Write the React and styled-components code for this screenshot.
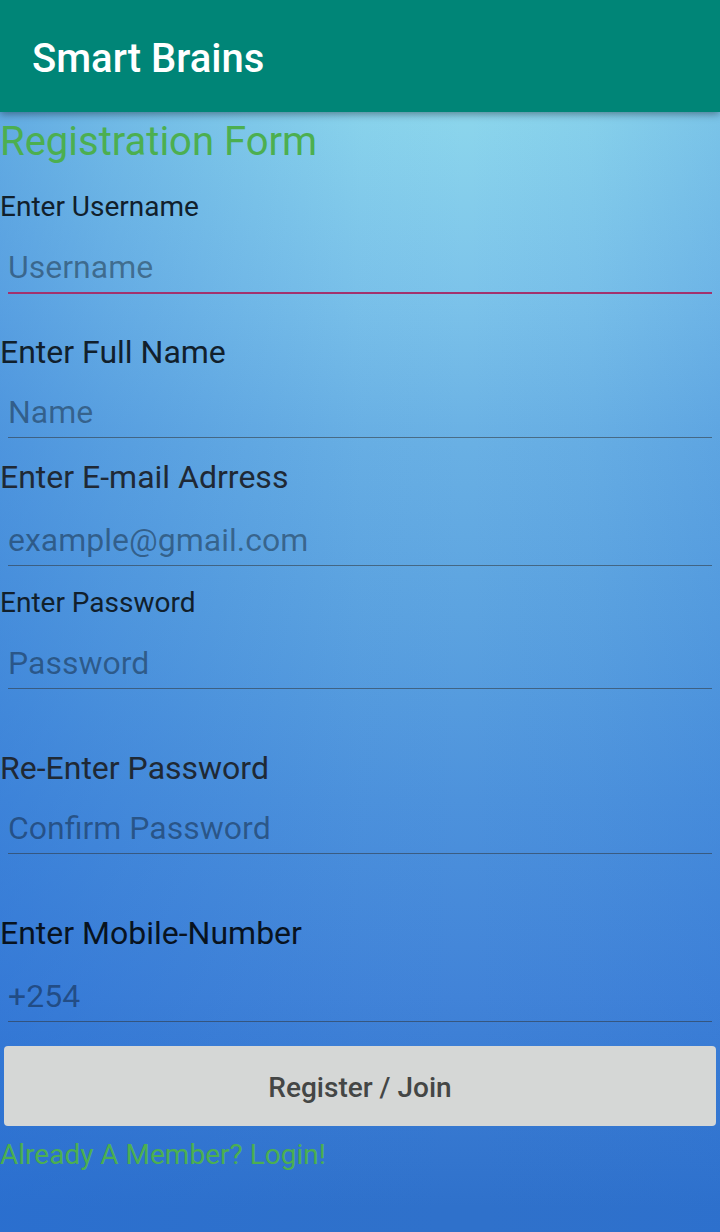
import React from "react";
import styled, { createGlobalStyle } from "styled-components";

const GlobalStyle = createGlobalStyle`
  * {
    box-sizing: border-box;
  }

  body {
    margin: 0;
    font-family: Roboto, "Liberation Sans", sans-serif;
  }
`;

const Screen = styled.div`
  display: flex;
  flex-direction: column;
  min-height: 100vh;
  background:
    linear-gradient(
      90deg,
      rgba(36, 108, 212, 0.4) 0%,
      rgba(36, 108, 212, 0.27) 15%,
      rgba(36, 108, 212, 0.14) 33%,
      rgba(36, 108, 212, 0.03) 50%,
      rgba(36, 108, 212, 0) 65%,
      rgba(36, 108, 212, 0.05) 82%,
      rgba(36, 108, 212, 0.17) 100%
    ),
    linear-gradient(
      180deg,
      #8cd6ec 9%,
      #7cc3ea 24%,
      #69b0e4 36%,
      #5ca3e0 50%,
      #4d92dc 65%,
      #4183d8 81%,
      #2f71cb 98%
    );
`;

const AppBar = styled.header`
  display: flex;
  align-items: center;
  height: 112px;
  padding: 6px 32px 0;
  background: #008577;
  box-shadow: 0 2px 8px rgba(0, 0, 0, 0.4);
`;

const AppTitle = styled.h1`
  margin: 0;
  color: #fff;
  font-size: 40px;
  font-weight: 500;
  line-height: 48px;
`;

const Form = styled.form`
  display: flex;
  flex-direction: column;
`;

const FormHeading = styled.h2`
  margin: 0;
  color: #4caf50;
  font-size: 40px;
  font-weight: 400;
  line-height: 60px;
`;

const Field = styled.div`
  display: flex;
  flex-direction: column;
  gap: ${(p) => p.$gap}px;
  padding-top: ${(p) => p.$space}px;
`;

const Label = styled.label`
  color: ${(p) => p.$color};
  font-size: ${(p) => (p.$small ? 28 : 32)}px;
  line-height: ${(p) => (p.$small ? 42 : 40)}px;
`;

const TextInput = styled.input`
  height: ${(p) => (p.$active ? 47 : 46)}px;
  margin: 0 8px;
  padding: 0 0 5px;
  border: 0;
  border-bottom: ${(p) => (p.$active ? "2px solid #a2326e" : "1px solid rgba(48, 52, 56, 0.55)")};
  border-radius: 0;
  outline: 0;
  background: transparent;
  color: rgba(0, 0, 0, 0.87);
  font-family: inherit;
  font-size: 32px;
  line-height: 40px;

  &::placeholder {
    color: rgba(0, 0, 0, 0.38);
    opacity: 1;
  }
`;

const SubmitButton = styled.button`
  height: 80px;
  margin: 24px 4px 8px;
  padding: 4px 16px 0;
  border: 0;
  border-radius: 4px;
  background: #d5d7d6;
  color: #444645;
  font-family: inherit;
  font-size: 28px;
  font-weight: 500;
  line-height: 36px;
  cursor: pointer;
`;

const LoginLink = styled.a`
  align-self: flex-start;
  color: #4caf50;
  font-size: 28px;
  line-height: 42px;
  text-decoration: none;
`;

const DARK = "#11202c";
const SOFT = "#1f2935";

const fields = [
  { id: "username", label: "Enter Username", hint: "Username", type: "text", small: true, active: true, color: DARK, space: 14, gap: 19 },
  { id: "name", label: "Enter Full Name", hint: "Name", type: "text", color: DARK, space: 38, gap: 20 },
  { id: "email", label: "Enter E-mail Adrress", hint: "example@gmail.com", type: "email", color: SOFT, space: 19, gap: 23 },
  { id: "password", label: "Enter Password", hint: "Password", type: "password", small: true, color: DARK, space: 16, gap: 19 },
  { id: "confirm", label: "Re-Enter Password", hint: "Confirm Password", type: "password", color: SOFT, space: 59, gap: 20 },
  { id: "mobile", label: "Enter Mobile-Number", hint: "+254", type: "tel", color: "#08131f", space: 59, gap: 23 },
];

export default function App() {
  return (
    <>
      <GlobalStyle />
      <Screen>
        <AppBar>
          <AppTitle>Smart Brains</AppTitle>
        </AppBar>
        <Form onSubmit={(e) => e.preventDefault()}>
          <FormHeading>Registration Form</FormHeading>
          {fields.map((f) => (
            <Field key={f.id} $space={f.space} $gap={f.gap}>
              <Label htmlFor={f.id} $small={f.small} $color={f.color}>
                {f.label}
              </Label>
              <TextInput id={f.id} type={f.type} placeholder={f.hint} $active={f.active} />
            </Field>
          ))}
          <SubmitButton type="submit">Register / Join</SubmitButton>
          <LoginLink href="#login">Already A Member? Login!</LoginLink>
        </Form>
      </Screen>
    </>
  );
}
